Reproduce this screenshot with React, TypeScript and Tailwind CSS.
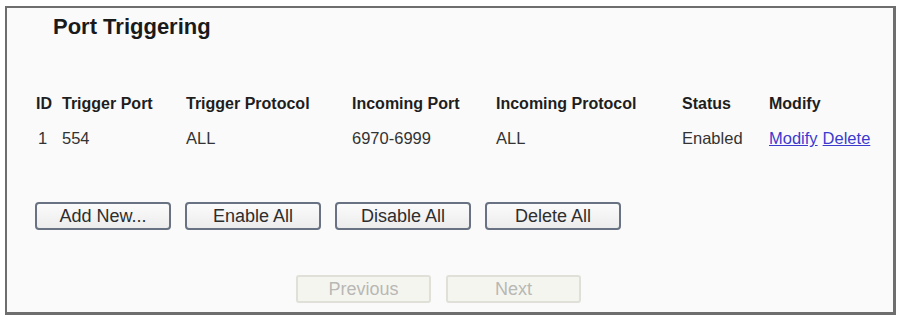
import React from "react";

const font = { fontFamily: '"Liberation Sans", Arial, sans-serif' };

function Btn({ label }: { label: string }) {
  return (
    <button
      className="w-[136px] h-[28px] rounded-[4px] border-2 border-[#687282] bg-gradient-to-b from-[#fbfbfb] to-[#ececec] text-[18px] leading-none text-[#2e2e2e] flex items-center justify-center"
    >
      {label}
    </button>
  );
}

function DisBtn({ label }: { label: string }) {
  return (
    <button
      disabled
      className="w-[135px] h-[28px] rounded-[3px] border-2 border-[#e0e0d8] bg-[#f5f5f0] text-[18px] leading-none text-[#b8b8b4] flex items-center justify-center"
    >
      {label}
    </button>
  );
}

export default function App() {
  const cols = "grid grid-cols-[26px_124px_166px_144px_186px_87px_1fr] items-center h-[35px]";
  return (
    <div className="w-[898px] h-[317px] bg-white pt-[6px] pl-[5px]" style={font}>
      <div className="w-[891px] h-[309px] border-2 border-r-[3px] border-b-[3px] border-[#6e6e6e] bg-[#fafafa] flex flex-col">
        <div className="pl-[46px] pt-[6px] text-[22px] leading-[26px] font-bold text-[#1a1a1a]">
          Port Triggering
        </div>
        <div className="pl-[29px] mt-[46px]">
          <div className={`${cols} text-[16px] font-bold text-[#1e1e1e]`}>
            <div>ID</div>
            <div>Trigger Port</div>
            <div>Trigger Protocol</div>
            <div>Incoming Port</div>
            <div>Incoming Protocol</div>
            <div>Status</div>
            <div>Modify</div>
          </div>
          <div className={`${cols} text-[16.5px] text-[#333]`}>
            <div className="pl-[2px]">1</div>
            <div>554</div>
            <div>ALL</div>
            <div>6970-6999</div>
            <div>ALL</div>
            <div>Enabled</div>
            <div className="flex gap-[5px] text-[#3a3acf] underline">
              <span>Modify</span>
              <span>Delete</span>
            </div>
          </div>
        </div>
        <div className="pl-[28px] mt-[46px] flex gap-[14px]">
          <Btn label="Add New..." />
          <Btn label="Enable All" />
          <Btn label="Disable All" />
          <Btn label="Delete All" />
        </div>
        <div className="pl-[289px] mt-[45px] flex gap-[15px]">
          <DisBtn label="Previous" />
          <DisBtn label="Next" />
        </div>
      </div>
    </div>
  );
}
